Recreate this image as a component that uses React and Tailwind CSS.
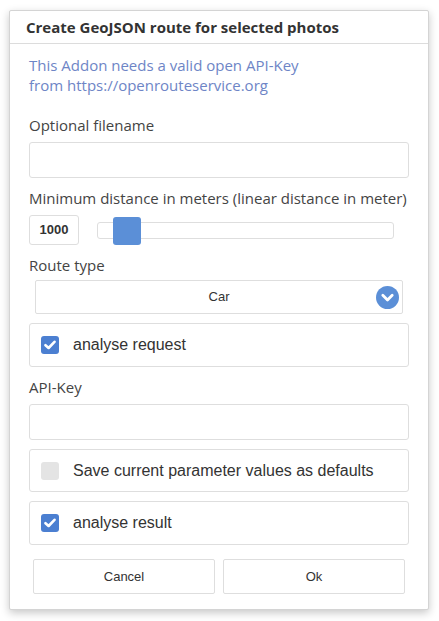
import React from "react";

function Check({ checked }) {
  return checked ? (
    <div className="w-[18px] h-[18px] rounded-[3px] bg-[#4b7fd1] flex items-center justify-center">
      <svg width="12" height="10" viewBox="0 0 12 10">
        <path d="M1.5 5.2 L4.6 8 L10.5 1.8" fill="none" stroke="#fff" strokeWidth="2.6" strokeLinecap="round" strokeLinejoin="round" />
      </svg>
    </div>
  ) : (
    <div className="w-[18px] h-[18px] rounded-[3px] bg-[#e4e4e4]" />
  );
}

function CheckRow({ checked, label, h = "h-[44px]" }) {
  return (
    <div className={`mt-[9px] ${h} border border-[#dedede] rounded-[3px] flex items-center pl-[11px]`}>
      <Check checked={checked} />
      <span className="ml-[14px] text-[16px] text-[#333] font-['Liberation_Sans',Arial,sans-serif]">{label}</span>
    </div>
  );
}

export default function App() {
  return (
    <div className="w-[439px] h-[621px] bg-white pt-[10px] pl-[9px] font-['Open_Sans',sans-serif]">
      <div className="w-[420px] h-[600px] bg-white border border-[#d4d4d4] rounded-[2px] shadow-[0_3px_8px_rgba(0,0,0,0.22)] flex flex-col">
        <div className="h-[33px] border-b border-[#dcdcdc] pl-[16px] flex items-center">
          <span className="text-[15px] font-bold text-[#333] leading-none">Create GeoJSON route for selected photos</span>
        </div>
        <div className="px-[19px] flex flex-col">
          <div className="mt-[11px] text-[15px] leading-[20px] text-[#6e85c6]">
            This Addon needs a valid open API-Key
            <br />
            from https://openrouteservice.org
          </div>
          <div className="mt-[20px] text-[15px] leading-[20px] text-[#444]">Optional filename</div>
          <div className="mt-[7px] h-[36px] border border-[#dedede] rounded-[3px]" />
          <div className="mt-[10px] text-[15px] leading-[20px] text-[#444] whitespace-nowrap">Minimum distance in meters (linear distance in meter)</div>
          <div className="mt-[7px] h-[30px] flex items-center">
            <div className="w-[50px] h-[30px] border border-[#dedede] rounded-[3px] flex items-center justify-center text-[13px] font-bold text-[#333] font-['Liberation_Sans',Arial,sans-serif]">1000</div>
            <div className="ml-[18px] w-[297px] h-[17px] border border-[#dedede] rounded-[3px] relative">
              <div className="absolute left-[15px] top-[-6px] w-[28px] h-[28px] rounded-[3px] bg-[#5b8fd7]" />
            </div>
          </div>
          <div className="mt-[10px] text-[15px] leading-[20px] text-[#444]">Route type</div>
          <div className="mt-[5px] mx-[6px] h-[34px] border border-[#dedede] rounded-[2px] flex items-center relative">
            <span className="flex-1 text-center text-[13px] text-[#333] font-['Liberation_Sans',Arial,sans-serif]">Car</span>
            <svg className="absolute right-[3px] top-[5px]" width="23" height="23" viewBox="0 0 23 23">
              <circle cx="11.5" cy="11.5" r="11.5" fill="#5b8fd7" />
              <path d="M6.8 9.2 L11.5 13.9 L16.2 9.2" fill="none" stroke="#fff" strokeWidth="2.8" strokeLinecap="round" strokeLinejoin="round" />
            </svg>
          </div>
          <CheckRow checked label="analyse request" />
          <div className="mt-[10px] text-[15px] leading-[20px] text-[#444]">API-Key</div>
          <div className="mt-[7px] h-[36px] border border-[#dedede] rounded-[3px]" />
          <CheckRow checked={false} label="Save current parameter values as defaults" h="h-[43px]" />
          <CheckRow checked label="analyse result" />
          <div className="mt-[14px] mx-[4px] flex gap-[8px]">
            <div className="flex-1 h-[35px] border border-[#dedede] rounded-[2px] flex items-center justify-center text-[13px] text-[#333] font-['Liberation_Sans',Arial,sans-serif]">Cancel</div>
            <div className="flex-1 h-[35px] border border-[#dedede] rounded-[2px] flex items-center justify-center text-[13px] text-[#333] font-['Liberation_Sans',Arial,sans-serif]">Ok</div>
          </div>
        </div>
      </div>
    </div>
  );
}
